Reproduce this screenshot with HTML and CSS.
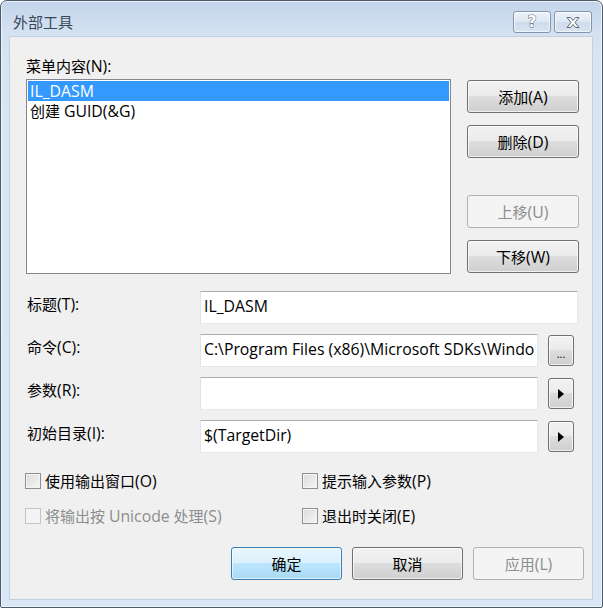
FILE: index.html
```html
<!DOCTYPE html>
<html lang="zh-CN">
<head>
<meta charset="utf-8">
<title>外部工具</title>
<link rel="stylesheet" href="styles.css">
</head>
<body>
<div class="window">
  <div class="titlebar">
    <span class="title">外部工具</span>
    <div class="caption-buttons">
      <div class="cap-btn"><span class="help-glyph">?</span></div>
      <div class="cap-btn">
        <svg width="16" height="13" viewBox="0 0 16 13"><path d="M2 1.5 L5.5 1.5 L8 4.5 L10.5 1.5 L14 1.5 L10 6.5 L14 11.5 L10.5 11.5 L8 8.5 L5.5 11.5 L2 11.5 L6 6.5 Z" fill="#fff" stroke="#5d6a7b" stroke-width="1" stroke-linejoin="round"/></svg>
      </div>
    </div>
  </div>
  <div class="client">
    <div class="top">
      <div class="list-col">
        <div class="label">菜单内容<span class="en">(N):</span></div>
        <div class="listbox">
          <div class="item selected"><span class="en">IL_DASM</span></div>
          <div class="item">创建 <span class="en">GUID(&amp;G)</span></div>
        </div>
      </div>
      <div class="btn-col">
        <div class="btn">添加<span class="en">(A)</span></div>
        <div class="btn">删除<span class="en">(D)</span></div>
        <div class="btn disabled spaced">上移<span class="en">(U)</span></div>
        <div class="btn">下移<span class="en">(W)</span></div>
      </div>
    </div>
    <div class="form">
      <div class="flabel">标题<span class="en">(T):</span></div>
      <div class="input wide"><span class="en">IL_DASM</span></div>
      <div class="flabel">命令<span class="en">(C):</span></div>
      <div class="input"><span class="en">C:\Program Files (x86)\Microsoft SDKs\Windo</span></div>
      <div class="small-btn dots">...</div>
      <div class="flabel">参数<span class="en">(R):</span></div>
      <div class="input"></div>
      <div class="small-btn"><svg width="8" height="12" viewBox="0 0 8 12"><path d="M1 1 L7 6 L1 11 Z" fill="#000"/></svg></div>
      <div class="flabel">初始目录<span class="en">(I):</span></div>
      <div class="input"><span class="en">$(TargetDir)</span></div>
      <div class="small-btn"><svg width="8" height="12" viewBox="0 0 8 12"><path d="M1 1 L7 6 L1 11 Z" fill="#000"/></svg></div>
    </div>
    <div class="checks">
      <label class="check"><span class="box"></span><span class="ctext">使用输出窗口<span class="en">(O)</span></span></label>
      <label class="check"><span class="box"></span><span class="ctext">提示输入参数<span class="en">(P)</span></span></label>
      <label class="check disabled"><span class="box"></span><span class="ctext">将输出按 <span class="en">Unicode</span> 处理<span class="en">(S)</span></span></label>
      <label class="check"><span class="box"></span><span class="ctext">退出时关闭<span class="en">(E)</span></span></label>
    </div>
    <div class="footer">
      <div class="btn default">确定</div>
      <div class="btn">取消</div>
      <div class="btn disabled">应用<span class="en">(L)</span></div>
    </div>
  </div>
</div>
</body>
</html>
```
FILE: styles.css
```css
* { box-sizing: border-box; }
html, body { margin: 0; padding: 0; background: #fff; }
body {
  font-family: "Open Sans", "Noto Sans CJK SC", sans-serif;
  font-size: 15px;
  color: #000;
}
.en { font-size: 15.8px; }
.window {
  width: 603px;
  height: 608px;
  border: 1px solid #4f5a69;
  border-radius: 7px 7px 2px 2px;
  background: linear-gradient(#c3d5ea 0px, #d3e1f1 30px, #d8e5f4 60px, #dae6f5 100%);
  padding: 0 9px 7px 8px;
  display: flex;
  flex-direction: column;
  box-shadow: inset 0 0 0 1px #eef4fb;
}
.titlebar {
  height: 35px;
  display: flex;
  align-items: flex-start;
  justify-content: space-between;
}
.title {
  margin-top: 10px;
  margin-left: 4px;
  line-height: 22px;
  font-family: "Noto Sans CJK SC", sans-serif;
  color: #3a4655;
  font-size: 15px;
}
.caption-buttons {
  display: flex;
  gap: 3px;
  margin-top: 10px;
  margin-right: 1px;
}
.cap-btn {
  width: 38px;
  height: 22px;
  border: 1px solid #8496ae;
  border-radius: 3px;
  background: linear-gradient(#eef3fa, #dde7f3 50%, #cfdcec 51%, #d9e4f1);
  box-shadow: inset 0 0 0 1px rgba(255,255,255,0.6);
  display: flex;
  align-items: center;
  justify-content: center;
}
.help-glyph {
  font-family: "DejaVu Sans", sans-serif;
  font-weight: bold;
  font-size: 15px;
  line-height: 15px;
  color: #fff;
  -webkit-text-stroke: 1px #5d6a7b;
  paint-order: stroke fill;
}
.client {
  flex: 1;
  background: #f0f0f0;
  padding: 19px 8px 0 16px;
  border: 1px solid #c3d0de;
  display: flex;
  flex-direction: column;
}
.top {
  display: flex;
  gap: 16px;
}
.list-col { width: 425px; }
.label { line-height: 20px; height: 20px; margin-bottom: 3px; }
.listbox {
  height: 195px;
  border: 1px solid #828790;
  background: #fff;
  padding: 1px;
}
.item {
  height: 20px;
  line-height: 20px;
  padding-left: 2px;
  white-space: nowrap;
}
.item.selected { background: #3399ff; color: #fff; }
.btn-col {
  width: 112px;
  padding-top: 24px;
  display: flex;
  flex-direction: column;
  gap: 12px;
}
.btn {
  width: 112px;
  height: 33px;
  border: 1px solid #707070;
  border-radius: 3px;
  background: linear-gradient(#f2f2f2 0%, #ebebeb 49%, #dddddd 50%, #cfcfcf 100%);
  box-shadow: inset 0 0 0 1px rgba(255,255,255,0.7);
  display: flex;
  align-items: center;
  justify-content: center;
  line-height: 20px;
  color: #000;
}
.btn.spaced { margin-top: 25px; }
.btn.disabled {
  border-color: #adb2b5;
  background: #f4f4f4;
  box-shadow: none;
  color: #8d8d8d;
}
.btn.default {
  border-color: #3c7fb1;
  background: linear-gradient(#eaf6fd 0%, #d9f0fc 49%, #bee6fd 50%, #a7d9f5 100%);
  box-shadow: inset 0 0 0 1px rgba(255,255,255,0.6);
}
.form {
  margin-top: 17px;
  display: grid;
  grid-template-columns: 174px 338px 10px 26px;
  grid-auto-rows: 33px;
  row-gap: 10px;
}
.flabel {
  grid-column: 1;
  line-height: 20px;
  padding-top: 3px;
  padding-left: 1px;
}
.input {
  grid-column: 2;
  border: 1px solid #e3e9ef;
  border-top-color: #abadb3;
  border-left-color: #e2e3ea;
  background: #fff;
  padding-left: 3px;
  line-height: 28px;
  white-space: nowrap;
  overflow: hidden;
}
.input.wide { grid-column: 2 / 5; width: 378px; }
.small-btn {
  grid-column: 4;
  height: 31px;
  align-self: center;
  border: 1px solid #707070;
  border-radius: 3px;
  background: linear-gradient(#f2f2f2 0%, #ebebeb 49%, #dddddd 50%, #cfcfcf 100%);
  box-shadow: inset 0 0 0 1px rgba(255,255,255,0.7);
  display: flex;
  align-items: center;
  justify-content: center;
}
.small-btn.dots {
  font-size: 11px;
  line-height: 11px;
  padding-top: 6px;
  color: #000;
}
.checks {
  margin-top: 18px;
  display: grid;
  grid-template-columns: 277px 200px;
  grid-auto-rows: 20px;
  row-gap: 15px;
  margin-left: -1px;
}
.check {
  display: flex;
  align-items: center;
  gap: 4px;
  line-height: 20px;
  white-space: nowrap;
}
.box {
  width: 16px;
  height: 16px;
  border: 1px solid #8e8f8f;
  background: linear-gradient(135deg, #dcdcdc, #f5f5f5);
  box-shadow: inset 0 0 0 1px #f4f4f4;
  flex: none;
}
.check.disabled { color: #8d8d8d; }
.check.disabled .box {
  border-color: #c5c5c5;
  background: #f4f4f4;
  box-shadow: none;
}
.footer {
  margin-top: 21px;
  display: flex;
  gap: 10px;
  padding-left: 205px;
}
```
